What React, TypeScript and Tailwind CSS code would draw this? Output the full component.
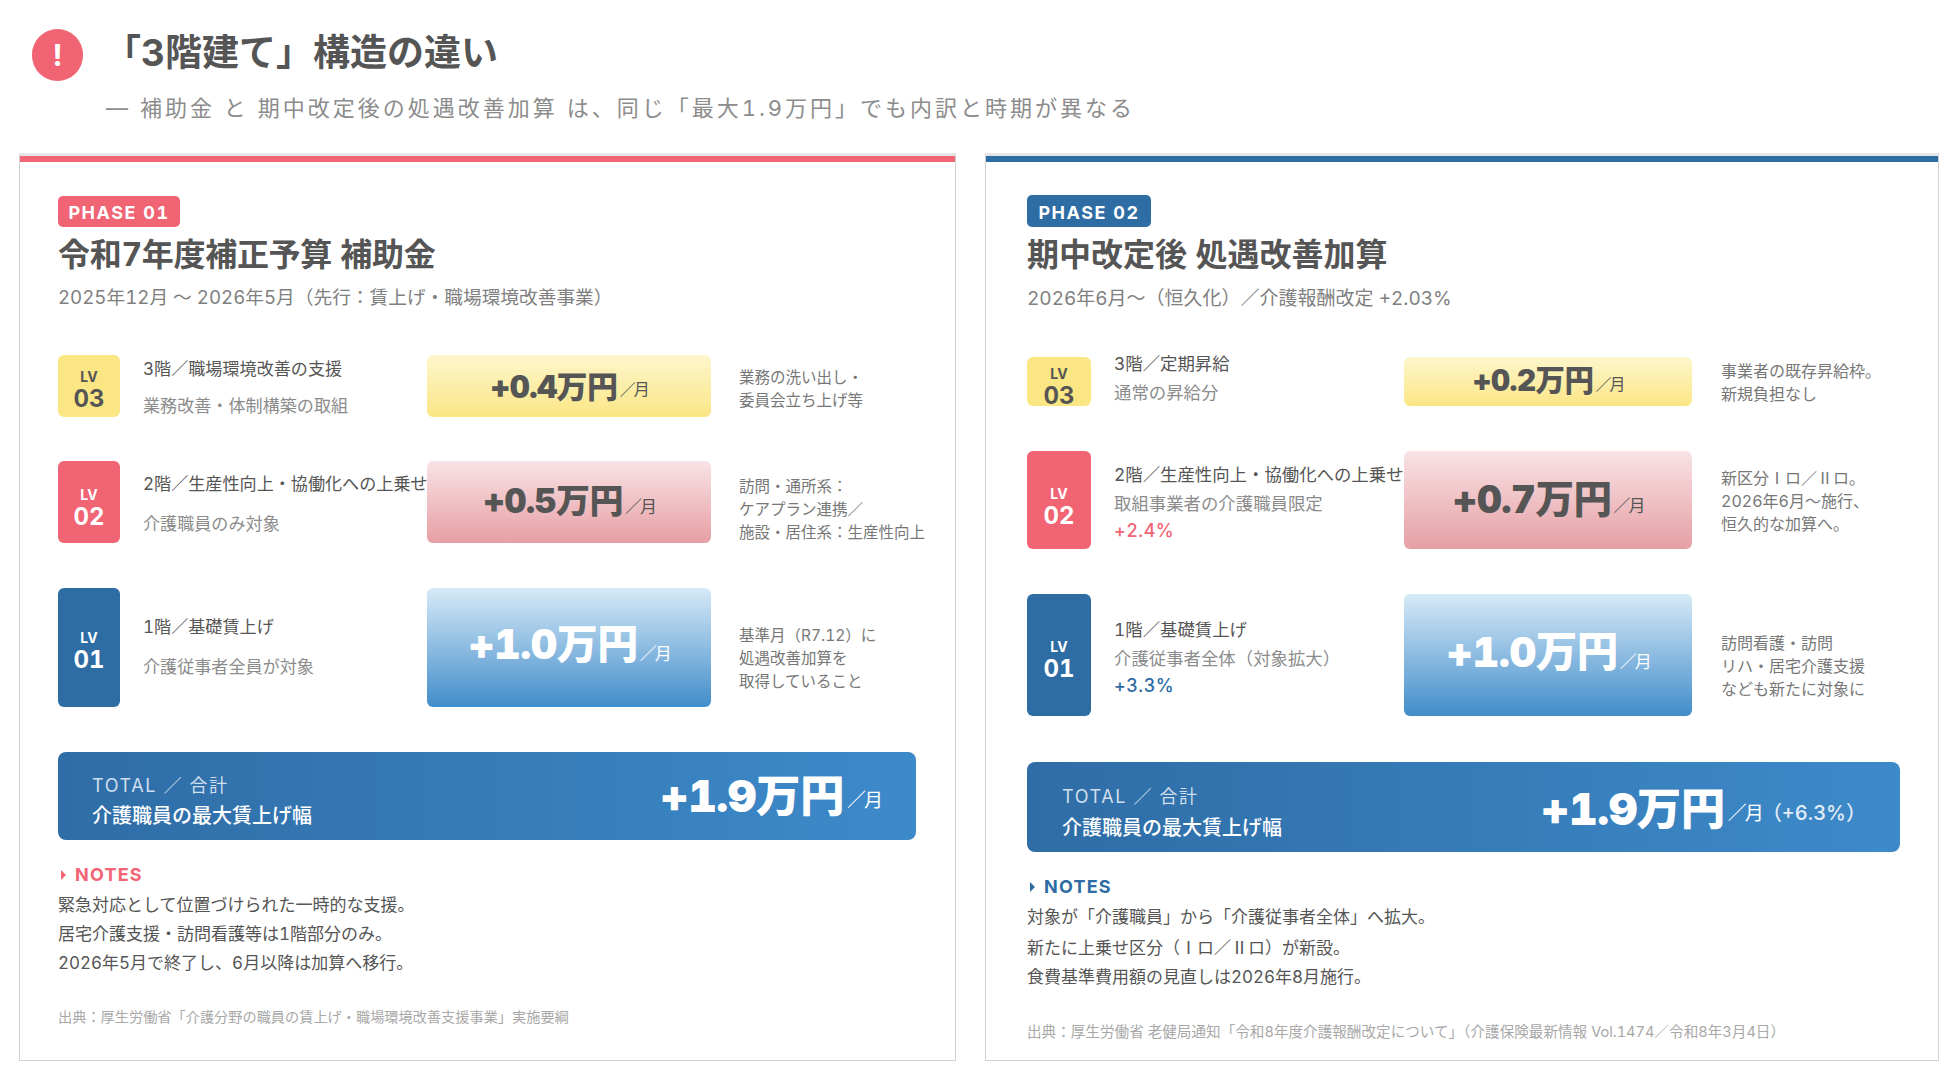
import React from "react";

type Lv = "03" | "02" | "01";
type Row = {
  lv: Lv;
  rowClass: string;
  lvClass: string;
  textClass: string;
  noteClass: string;
  title: string;
  sub: string;
  subClass: string;
  pct?: string;
  amount: string;
  amountClass: string;
  unitClass: string;
  note: React.ReactNode[];
};

const lvBadge: Record<Lv, string> = {
  "03": "bg-[#fbe684] text-[#555555]",
  "02": "bg-[#f06473] text-white",
  "01": "bg-[#2e6ca4] text-white",
};
const valueBox: Record<Lv, string> = {
  "03": "bg-gradient-to-b from-[#fdf6cb] to-[#fbe684] text-[#555555]",
  "02": "bg-gradient-to-b from-[#f8e3e6] to-[#e59fa4] text-[#555555]",
  "01": "bg-gradient-to-b from-[#d6eaf6] to-[#3f8dca] text-white",
};

function Roman({ children }: { children: React.ReactNode }) {
  return <span className="font-['Noto_Sans_CJK_JP',sans-serif]">{children}</span>;
}

const left: Row[] = [
  {
    lv: "03",
    rowClass: "h-[62px]",
    lvClass: "pt-[8px]",
    textClass: "pt-[3px]",
    noteClass: "pt-[5px] text-[15.5px]",
    title: "3階／職場環境改善の支援",
    sub: "業務改善・体制構築の取組",
    subClass: "mt-[13px]",
    amount: "+0.4万円",
    amountClass: "text-[31px]",
    unitClass: "text-[16px] mt-[6px]",
    note: ["業務の洗い出し・", "委員会立ち上げ等"],
  },
  {
    lv: "02",
    rowClass: "h-[82px] mt-[44px]",
    lvClass: "pt-[12px]",
    textClass: "pt-[3px]",
    noteClass: "pt-[15px] text-[15.5px]",
    title: "2階／生産性向上・協働化への上乗せ",
    sub: "介護職員のみ対象",
    subClass: "mt-[16px]",
    amount: "+0.5万円",
    amountClass: "text-[34px] mb-[2px]",
    unitClass: "text-[17px] mt-[11px]",
    note: ["訪問・通所系：", "ケアプラン連携／", "施設・居住系：生産性向上"],
  },
  {
    lv: "01",
    rowClass: "h-[119px] mt-[45px]",
    lvClass: "pt-[7px]",
    textClass: "pb-[2px]",
    noteClass: "pt-[22px] text-[15.5px]",
    title: "1階／基礎賃上げ",
    sub: "介護従事者全員が対象",
    subClass: "mt-[16px]",
    amount: "+1.0万円",
    amountClass: "text-[41px] mb-[7px]",
    unitClass: "text-[17px] mt-[14px]",
    note: ["基準月（R7.12）に", "処遇改善加算を", "取得していること"],
  },
];

const right: Row[] = [
  {
    lv: "03",
    rowClass: "h-[49px]",
    lvClass: "pt-[10px]",
    textClass: "pb-[6px]",
    noteClass: "pt-[2px] text-[16px]",
    title: "3階／定期昇給",
    sub: "通常の昇給分",
    subClass: "mt-[5px]",
    amount: "+0.2万円",
    amountClass: "text-[29.5px] mb-[2px]",
    unitClass: "text-[16px] mt-[4px]",
    note: ["事業者の既存昇給枠。", "新規負担なし"],
  },
  {
    lv: "02",
    rowClass: "h-[98px] mt-[45px]",
    lvClass: "pt-[14px]",
    textClass: "pt-[4px]",
    noteClass: "pt-[1px] text-[16px]",
    title: "2階／生産性向上・協働化への上乗せ",
    sub: "取組事業者の介護職員限定",
    subClass: "mt-[5px]",
    pct: "+2.4%",
    amount: "+0.7万円",
    amountClass: "text-[38.5px] mb-[2px]",
    unitClass: "text-[17px] mt-[13px]",
    note: [
      <>新区分<Roman>Ⅰ</Roman>ロ／<Roman>Ⅱ</Roman>ロ。</>,
      "2026年6月〜施行、",
      "恒久的な加算へ。",
    ],
  },
  {
    lv: "01",
    rowClass: "h-[122px] mt-[45px]",
    lvClass: "pt-[9px]",
    textClass: "pt-[4px]",
    noteClass: "pt-[22px] text-[16px]",
    title: "1階／基礎賃上げ",
    sub: "介護従事者全体（対象拡大）",
    subClass: "mt-[5px]",
    pct: "+3.3%",
    amount: "+1.0万円",
    amountClass: "text-[41.5px] mb-[5px]",
    unitClass: "text-[17px] mt-[14px]",
    note: ["訪問看護・訪問", "リハ・居宅介護支援", "なども新たに対象に"],
  },
];

function Floor({ r, wide }: { r: Row; wide: boolean }) {
  return (
    <div className={`flex items-stretch ${r.rowClass}`}>
      <div
        className={`${wide ? "w-[64px]" : "w-[62px]"} shrink-0 rounded-[6px] flex flex-col items-center justify-center ${lvBadge[r.lv]} ${r.lvClass}`}
      >
        <span className="text-[14px] leading-[17px] font-bold">LV</span>
        <span className="text-[24px] leading-[27px] font-bold">{r.lv}</span>
      </div>
      <div
        className={`${wide ? "w-[290px] ml-[23px] text-[17.4px]" : "w-[284px] ml-[23px] text-[17.1px]"} shrink-0 flex flex-col justify-center ${r.textClass}`}
      >
        <div className="leading-[24px] text-[#555555] whitespace-nowrap">{r.title}</div>
        <div className={`leading-[24px] text-[#8c8c8c] whitespace-nowrap ${r.subClass}`}>{r.sub}</div>
        {r.pct && (
          <div
            className={`text-[18px] leading-[22px] mt-[4px] font-medium tracking-[0.5px] ${r.lv === "02" ? "text-[#f06473]" : "text-[#2e6ca4]"}`}
          >
            {r.pct}
          </div>
        )}
      </div>
      <div
        className={`${wide ? "w-[288px]" : "w-[284px]"} shrink-0 rounded-[6px] flex items-center justify-center ${valueBox[r.lv]}`}
      >
        <span className={`font-black tracking-[-0.5px] leading-none ${r.amountClass}`}>{r.amount}</span>
        <span className={`ml-[2px] font-normal leading-none tracking-[-2px] ${r.unitClass}`}>／月</span>
      </div>
      <div className={`${wide ? "ml-[29px]" : "ml-[28px]"} flex flex-col justify-center ${r.noteClass}`}>
        {r.note.map((n, i) => (
          <div key={i} className="leading-[23px] text-[#777777] whitespace-nowrap">
            {n}
          </div>
        ))}
      </div>
    </div>
  );
}

function Notes({ color, fill }: { color: string; fill: string }) {
  return (
    <div className={`flex items-center gap-[9px] pl-[3px] text-[18px] leading-[20px] font-bold tracking-[1.2px] ${color}`}>
      <svg width="5" height="10" viewBox="0 0 5 10" className={fill}>
        <polygon points="0,0 5,5 0,10" />
      </svg>
      NOTES
    </div>
  );
}

export default function App() {
  return (
    <div className="w-[1958px] h-[1080px] bg-white overflow-hidden tabular-nums font-['Inter','Noto_Sans_CJK_JP',sans-serif]">
      <header className="h-[153px] pl-[32px]">
        <div className="flex items-center pt-[29px]">
          <div className="w-[51px] h-[52px] rounded-full bg-[#f06473] text-white flex items-center justify-center text-[30px] font-bold">
            !
          </div>
          <h1 className="ml-[21px] -mt-[4px] text-[37px] leading-[46px] font-bold text-[#555555]">
            「3階建て」構造の違い
          </h1>
        </div>
        <p className="mt-[11px] ml-[74px] text-[22px] leading-[32px] tracking-[3px] text-[#8c8c8c] whitespace-nowrap">
          ― 補助金 と 期中改定後の処遇改善加算 は、同じ「最大1.9万円」でも内訳と時期が異なる
        </p>
      </header>

      <main className="flex pl-[19px] gap-[29px]">
        <section className="w-[937px] h-[908px] border border-[#d2d2d2] border-t-[3px] border-t-[#e6e6e6]">
          <div className="h-[6px] bg-[#f06473]" />
          <div className="pl-[38px] pr-[39px] pt-[34px]">
            <span className="flex items-center justify-center pt-[2px] w-[122px] h-[31px] rounded-[5px] bg-[#f06473] text-white text-[18px] font-bold tracking-[1.5px]">
              PHASE 01
            </span>
            <h2 className="mt-[8px] text-[32px] leading-[40px] font-bold tracking-[-0.3px] text-[#555555] whitespace-nowrap">
              令和7年度補正予算 補助金
            </h2>
            <p className="mt-[9px] text-[18.7px] leading-[28px] text-[#808080] whitespace-nowrap">
              2025年12月 〜 2026年5月（先行：賃上げ・職場環境改善事業）
            </p>
            <div className="mt-[43px]">
              {left.map((r) => (
                <Floor key={r.lv} r={r} wide={false} />
              ))}
            </div>
            <div className="mt-[45px] h-[88px] rounded-[8px] bg-gradient-to-r from-[#2f6da6] to-[#3d8aca] text-white flex items-center justify-between pl-[34px] pr-[35px]">
              <div className="pt-[10px]">
                <div className="text-[18px] leading-[24px] tracking-[1.6px] text-[#cfdfee]">TOTAL ／ 合計</div>
                <div className="mt-[5px] text-[20px] leading-[26px] font-medium whitespace-nowrap">介護職員の最大賃上げ幅</div>
              </div>
              <div className="flex items-center">
                <span className="text-[44.5px] leading-none font-black tracking-[-0.5px]">+1.9万円</span>
                <span className="ml-[3px] mt-[8px] text-[19px] leading-none tracking-[-2px]">／月</span>
              </div>
            </div>
            <div className="mt-[25px]">
              <Notes color="text-[#f06473]" fill="fill-[#f06473]" />
            </div>
            <div className="mt-[6px] text-[17px] leading-[29px] text-[#555555]">
              <div>緊急対応として位置づけられた一時的な支援。</div>
              <div>居宅介護支援・訪問看護等は1階部分のみ。</div>
              <div>2026年5月で終了し、6月以降は加算へ移行。</div>
            </div>
            <p className="mt-[29px] text-[14.2px] leading-[20px] text-[#a8a8a8] whitespace-nowrap">
              出典：厚生労働省「介護分野の職員の賃上げ・職場環境改善支援事業」実施要綱
            </p>
          </div>
        </section>

        <section className="w-[954px] h-[908px] border border-[#d2d2d2] border-t-[3px] border-t-[#e6e6e6]">
          <div className="h-[6px] bg-[#2e6ca4]" />
          <div className="pl-[41px] pr-[38px] pt-[33px]">
            <span className="flex items-center justify-center pt-[2px] w-[124px] h-[32px] rounded-[5px] bg-[#2e6ca4] text-white text-[18px] font-bold tracking-[1.5px]">
              PHASE 02
            </span>
            <h2 className="mt-[8px] text-[32px] leading-[40px] font-bold text-[#555555] whitespace-nowrap">
              期中改定後 処遇改善加算
            </h2>
            <p className="mt-[10px] text-[19px] leading-[28px] text-[#808080] whitespace-nowrap">
              2026年6月〜（恒久化）／介護報酬改定 +2.03%
            </p>
            <div className="mt-[44px]">
              {right.map((r) => (
                <Floor key={r.lv} r={r} wide={true} />
              ))}
            </div>
            <div className="mt-[46px] h-[90px] rounded-[8px] bg-gradient-to-r from-[#2f6da6] to-[#3d8aca] text-white flex items-center justify-between pl-[35px] pr-[34px]">
              <div className="pt-[12px]">
                <div className="text-[18px] leading-[24px] tracking-[1.6px] text-[#cfdfee]">TOTAL ／ 合計</div>
                <div className="mt-[6px] text-[20px] leading-[26px] font-medium whitespace-nowrap">介護職員の最大賃上げ幅</div>
              </div>
              <div className="flex items-center pt-[4px]">
                <span className="text-[44.5px] leading-none font-black tracking-[-0.5px]">+1.9万円</span>
                <span className="ml-[3px] mt-[8px] text-[19px] leading-none tracking-[-2px]">／月</span>
                <span className="mt-[8px] text-[20px] leading-none font-medium text-[#e3edf6]">（+6.3%）</span>
              </div>
            </div>
            <div className="mt-[25px]">
              <Notes color="text-[#2e6ca4]" fill="fill-[#2e6ca4]" />
            </div>
            <div className="mt-[6px] text-[17px] leading-[29px] text-[#555555]">
              <div>対象が「介護職員」から「介護従事者全体」へ拡大。</div>
              <div>
                新たに上乗せ区分（<Roman>Ⅰ</Roman>ロ／<Roman>Ⅱ</Roman>ロ）が新設。
              </div>
              <div>食費基準費用額の見直しは2026年8月施行。</div>
            </div>
            <p className="mt-[30px] text-[14.6px] leading-[20px] text-[#a8a8a8] whitespace-nowrap">
              出典：厚生労働省 老健局通知「令和8年度介護報酬改定について」（介護保険最新情報 Vol.1474／令和8年3月4日）
            </p>
          </div>
        </section>
      </main>
    </div>
  );
}
